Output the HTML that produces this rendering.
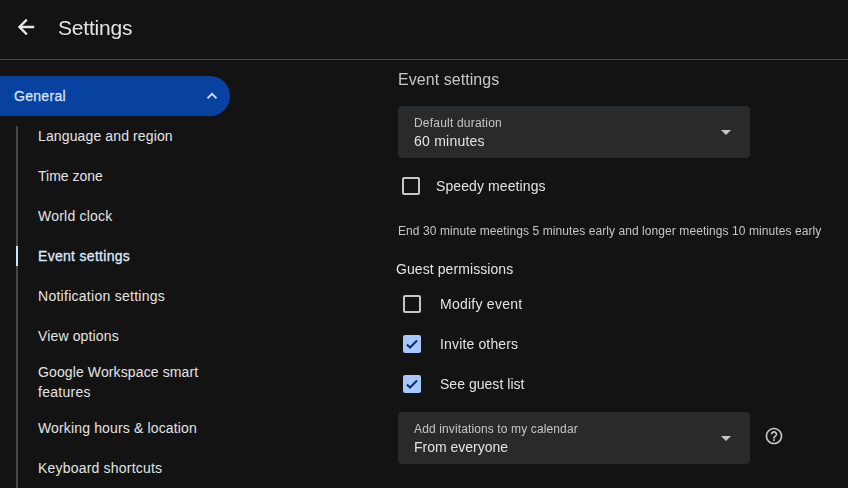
<!DOCTYPE html>
<html><head><meta charset="utf-8">
<style>
*{box-sizing:border-box;margin:0;padding:0}
html,body{width:848px;height:488px;overflow:hidden;background:#131314;font-family:"Liberation Sans",sans-serif;color:#e3e3e3}
#root{position:absolute;left:0;top:0;width:848px;height:488px}
.gs{position:absolute;will-change:transform}
#gs1{left:0;top:0;width:848px;height:58px}
#gs2{left:380px;top:60px;width:468px;height:428px}
.abs{position:absolute}
#hdrline{left:0;top:59px;width:848px;height:1px;background:#444746}
#title{left:58px;top:13.5px;font-size:21px;line-height:28px;color:#e3e3e3;white-space:nowrap;letter-spacing:-0.2px}
#pill{left:0;top:76px;width:230px;height:40px;background:#0842a0;border-radius:0 20px 20px 0}
#pill span{position:absolute;left:14px;top:11px;font-size:14px;line-height:18px;color:#d3e3fd;-webkit-text-stroke:0.28px #d3e3fd;letter-spacing:0.3px}
#vline{left:16px;top:126px;width:2px;height:362px;background:#444746}
#vsel{left:16px;top:246px;width:2px;height:20px;background:#d3e3fd}
.nav{left:38px;font-size:14px;line-height:20px;color:#e3e3e3;white-space:nowrap}
.nav.sel{color:#dfe9fb;-webkit-text-stroke:0.3px #dfe9fb;letter-spacing:0.3px}
.dd{left:18px;width:352px;height:52px;background:#282a2c;border-radius:4px}
.dd .l{position:absolute;left:16px;top:9px;font-size:12px;line-height:16px;color:#c4c7c5;white-space:nowrap}
.dd .v{position:absolute;left:16px;top:25px;font-size:14px;line-height:20px;color:#e3e3e3;white-space:nowrap}
.dd .a{position:absolute;left:323px;top:24px;width:0;height:0;border-left:5px solid transparent;border-right:5px solid transparent;border-top:5px solid #c4c7c5}
.cb{width:18px;height:18px;border:2px solid #c4c7c5;border-radius:2px}
.cb.on{background:#a8c7fa;border-color:#a8c7fa}
.lbl{font-size:14px;line-height:20px;color:#e3e3e3;white-space:nowrap}
</style></head><body><div id="root">
<svg class="abs" style="left:14px;top:15px" width="24" height="24" viewBox="0 0 24 24"><path fill="#e8e8e8" stroke="#e8e8e8" stroke-width="0.45" d="M20 11H7.83l5.59-5.59L12 4l-8 8 8 8 1.41-1.41L7.83 13H20v-2z"/></svg>
<div id="gs1" class="gs"><div id="title" class="abs">Settings</div></div>
<div id="hdrline" class="abs"></div>
<div id="pill" class="abs"><span id="t_gen">General</span>
<svg class="abs" style="left:202px;top:10px" width="20" height="20" viewBox="0 0 24 24"><path fill="#d3e3fd" stroke="#d3e3fd" stroke-width="0.5" d="M7.41 15.41L12 10.83l4.59 4.58L18 14l-6-6-6 6z"/></svg></div>
<div id="vline" class="abs"></div><div id="vsel" class="abs"></div>
<div id="t_lang" class="abs nav" style="top:126px;letter-spacing:.125px">Language and region</div>
<div id="t_tz" class="abs nav" style="top:166px">Time zone</div>
<div id="t_wc" class="abs nav" style="top:206px;letter-spacing:.22px">World clock</div>
<div id="t_es" class="abs nav sel" style="top:246px">Event settings</div>
<div id="t_notif" class="abs nav" style="top:286px;letter-spacing:.27px">Notification settings</div>
<div id="t_view" class="abs nav" style="top:326px;letter-spacing:.14px">View options</div>
<div id="t_gws" class="abs nav" style="top:362px;letter-spacing:.115px">Google Workspace smart</div>
<div id="t_feat" class="abs nav" style="top:382px;letter-spacing:.27px">features</div>
<div id="t_wh" class="abs nav" style="top:418px;letter-spacing:.15px">Working hours &amp; location</div>
<div id="t_ks" class="abs nav" style="top:458px;letter-spacing:.2px">Keyboard shortcuts</div>

<div id="gs2" class="gs">
<div id="t_head" class="abs" style="left:18px;top:9px;font-size:16px;line-height:22px;color:#c4c7c5;white-space:nowrap;letter-spacing:.05px">Event settings</div>
<div class="abs dd" style="top:46px"><div id="t_d1l" class="l" style="letter-spacing:.2px">Default duration</div><div id="t_d1v" class="v" style="letter-spacing:.23px">60 minutes</div><div class="a"></div></div>
<div class="abs cb" style="left:22px;top:117px"></div>
<div id="t_sp" class="abs lbl" style="left:56px;top:116px;letter-spacing:.1px">Speedy meetings</div>
<div id="t_desc" class="abs" style="left:18px;top:163px;font-size:12px;line-height:16px;color:#c4c7c5;white-space:nowrap;letter-spacing:.077px">End 30 minute meetings 5 minutes early and longer meetings 10 minutes early</div>
<div id="t_guest" class="abs lbl" style="left:16px;top:199px;letter-spacing:.08px">Guest permissions</div>
<div class="abs cb" style="left:23px;top:235px"></div>
<div id="t_mod" class="abs lbl" style="left:60px;top:234px;letter-spacing:.25px">Modify event</div>
<div class="abs cb on" style="left:23px;top:275px"><svg style="position:absolute;left:-2px;top:-2px" width="18" height="18" viewBox="0 0 18 18"><path d="M4 9.5l3 3 7-7" fill="none" stroke="#062e6f" stroke-width="2"/></svg></div>
<div id="t_inv" class="abs lbl" style="left:60px;top:274px;letter-spacing:.15px">Invite others</div>
<div class="abs cb on" style="left:23px;top:315px"><svg style="position:absolute;left:-2px;top:-2px" width="18" height="18" viewBox="0 0 18 18"><path d="M4 9.5l3 3 7-7" fill="none" stroke="#062e6f" stroke-width="2"/></svg></div>
<div id="t_see" class="abs lbl" style="left:60px;top:314px;letter-spacing:.03px">See guest list</div>
<div class="abs dd" style="top:352px"><div id="t_d2l" class="l" style="letter-spacing:.124px">Add invitations to my calendar</div><div id="t_d2v" class="v">From everyone</div><div class="a"></div></div>
<svg class="abs" style="left:384px;top:366px" width="20" height="20" viewBox="0 0 24 24"><path fill="#c4c7c5" d="M11 18h2v-2h-2v2zm1-16C6.48 2 2 6.48 2 12s4.48 10 10 10 10-4.480 10-10S17.520 2 12 2zm0 18c-4.410 0-8-3.590-8-8s3.590-8 8-8 8 3.590 8 8-3.590 8-8 8zm0-14c-2.210 0-4 1.790-4 4h2c0-1.100.9-2 2-2s2 .9 2 2c0 2-3 1.750-3 5h2c0-2.250 3-2.500 3-5 0-2.210-1.790-4-4-4z"/></svg>
</div>
</div></body></html>
